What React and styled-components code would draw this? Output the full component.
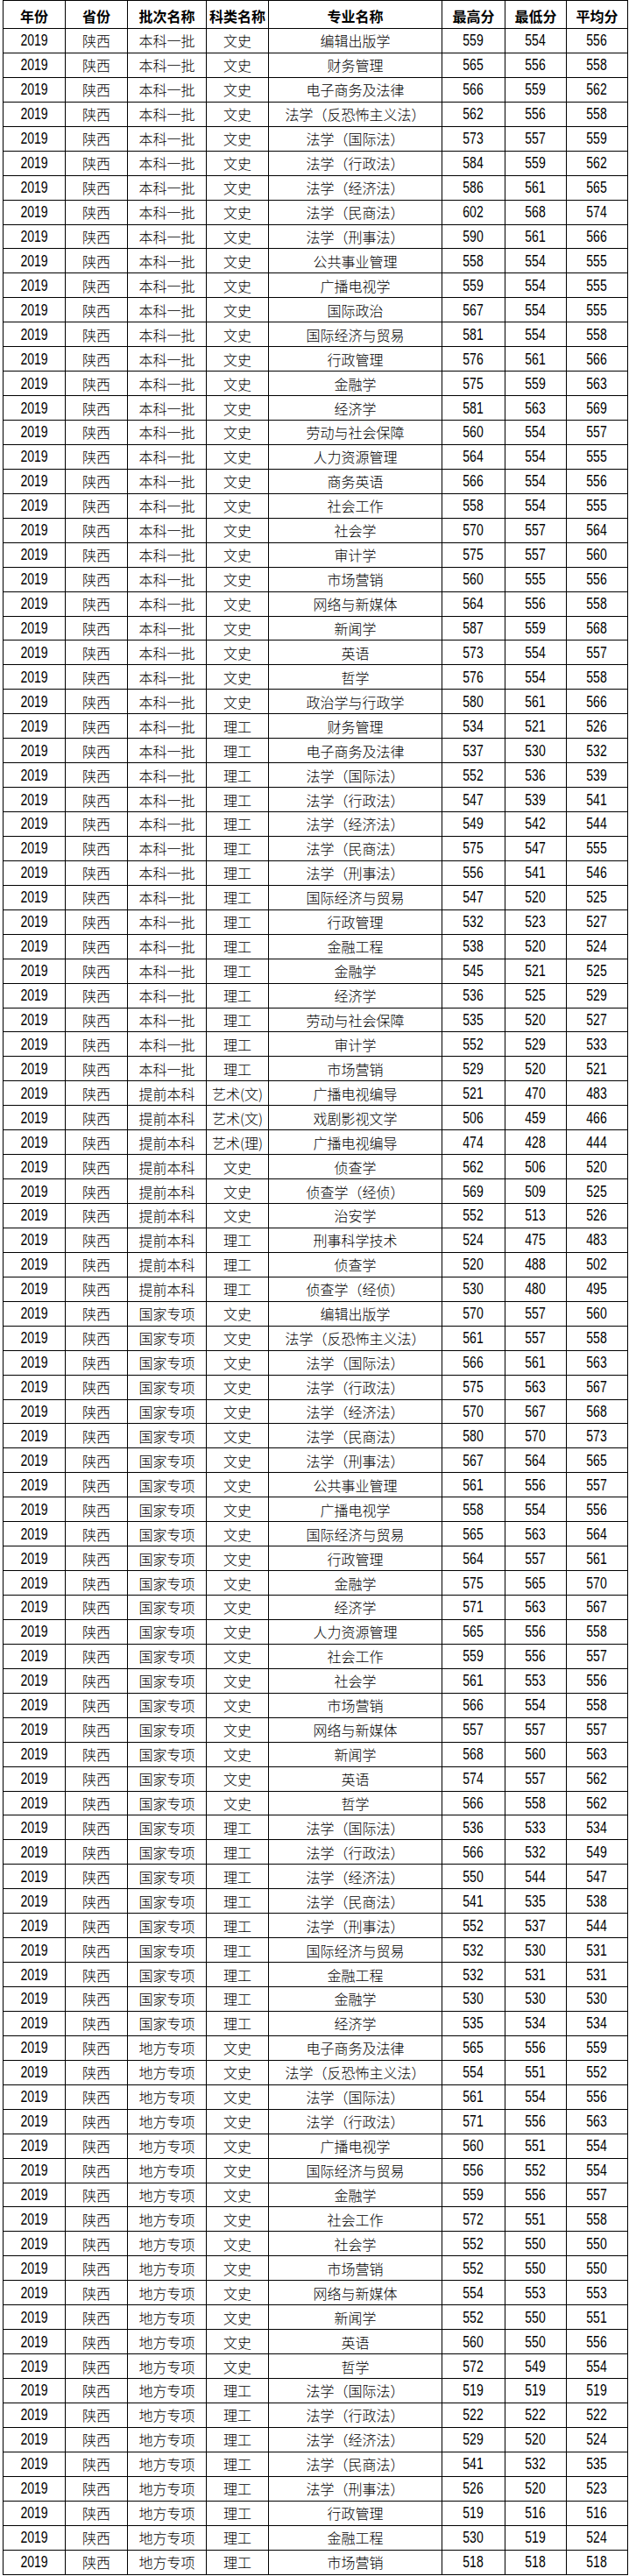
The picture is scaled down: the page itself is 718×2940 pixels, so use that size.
import React from "react";
import styled, { createGlobalStyle } from "styled-components";

const GlobalStyle = createGlobalStyle`
  html, body {
    margin: 0;
    padding: 0;
    background: #fff;
  }
`;

const Page = styled.div`
  width: 718px;
  padding-left: 3px;
  box-sizing: border-box;
  background: #fff;
`;

const Sheet = styled.div`
  display: grid;
  grid-template-columns: 71px 71px 90px 71px 198px 72px 70px 70px;
  grid-template-rows: 32px;
  grid-auto-rows: 27.94px;
  width: 714px;
  border-left: 1px solid #000;
  border-top: 1px solid #000;
  box-sizing: border-box;
  color: #000;
  font-family: "Noto Sans CJK SC", "Liberation Sans", sans-serif;
`;

const Cell = styled.div`
  display: flex;
  align-items: center;
  justify-content: center;
  border-right: 1px solid #000;
  border-bottom: 1px solid #000;
  box-sizing: border-box;
  font-size: 16px;
  font-weight: 300;
  line-height: 1;
  white-space: nowrap;
  overflow: hidden;
`;

const HeadCell = styled(Cell)`
  font-weight: 700;
  padding-top: 2px;
`;

const Num = styled.span`
  display: inline-block;
  font-family: "Liberation Sans", Arial, sans-serif;
  font-size: 18px;
  font-weight: 400;
  transform: scaleX(0.78);
`;

const headers = ["年份", "省份", "批次名称", "科类名称", "专业名称", "最高分", "最低分", "平均分"];

const rows = [
  ["本科一批", "文史", "编辑出版学", 559, 554, 556],
  ["本科一批", "文史", "财务管理", 565, 556, 558],
  ["本科一批", "文史", "电子商务及法律", 566, 559, 562],
  ["本科一批", "文史", "法学（反恐怖主义法）", 562, 556, 558],
  ["本科一批", "文史", "法学（国际法）", 573, 557, 559],
  ["本科一批", "文史", "法学（行政法）", 584, 559, 562],
  ["本科一批", "文史", "法学（经济法）", 586, 561, 565],
  ["本科一批", "文史", "法学（民商法）", 602, 568, 574],
  ["本科一批", "文史", "法学（刑事法）", 590, 561, 566],
  ["本科一批", "文史", "公共事业管理", 558, 554, 555],
  ["本科一批", "文史", "广播电视学", 559, 554, 555],
  ["本科一批", "文史", "国际政治", 567, 554, 555],
  ["本科一批", "文史", "国际经济与贸易", 581, 554, 558],
  ["本科一批", "文史", "行政管理", 576, 561, 566],
  ["本科一批", "文史", "金融学", 575, 559, 563],
  ["本科一批", "文史", "经济学", 581, 563, 569],
  ["本科一批", "文史", "劳动与社会保障", 560, 554, 557],
  ["本科一批", "文史", "人力资源管理", 564, 554, 555],
  ["本科一批", "文史", "商务英语", 566, 554, 556],
  ["本科一批", "文史", "社会工作", 558, 554, 555],
  ["本科一批", "文史", "社会学", 570, 557, 564],
  ["本科一批", "文史", "审计学", 575, 557, 560],
  ["本科一批", "文史", "市场营销", 560, 555, 556],
  ["本科一批", "文史", "网络与新媒体", 564, 556, 558],
  ["本科一批", "文史", "新闻学", 587, 559, 568],
  ["本科一批", "文史", "英语", 573, 554, 557],
  ["本科一批", "文史", "哲学", 576, 554, 558],
  ["本科一批", "文史", "政治学与行政学", 580, 561, 566],
  ["本科一批", "理工", "财务管理", 534, 521, 526],
  ["本科一批", "理工", "电子商务及法律", 537, 530, 532],
  ["本科一批", "理工", "法学（国际法）", 552, 536, 539],
  ["本科一批", "理工", "法学（行政法）", 547, 539, 541],
  ["本科一批", "理工", "法学（经济法）", 549, 542, 544],
  ["本科一批", "理工", "法学（民商法）", 575, 547, 555],
  ["本科一批", "理工", "法学（刑事法）", 556, 541, 546],
  ["本科一批", "理工", "国际经济与贸易", 547, 520, 525],
  ["本科一批", "理工", "行政管理", 532, 523, 527],
  ["本科一批", "理工", "金融工程", 538, 520, 524],
  ["本科一批", "理工", "金融学", 545, 521, 525],
  ["本科一批", "理工", "经济学", 536, 525, 529],
  ["本科一批", "理工", "劳动与社会保障", 535, 520, 527],
  ["本科一批", "理工", "审计学", 552, 529, 533],
  ["本科一批", "理工", "市场营销", 529, 520, 521],
  ["提前本科", "艺术(文)", "广播电视编导", 521, 470, 483],
  ["提前本科", "艺术(文)", "戏剧影视文学", 506, 459, 466],
  ["提前本科", "艺术(理)", "广播电视编导", 474, 428, 444],
  ["提前本科", "文史", "侦查学", 562, 506, 520],
  ["提前本科", "文史", "侦查学（经侦）", 569, 509, 525],
  ["提前本科", "文史", "治安学", 552, 513, 526],
  ["提前本科", "理工", "刑事科学技术", 524, 475, 483],
  ["提前本科", "理工", "侦查学", 520, 488, 502],
  ["提前本科", "理工", "侦查学（经侦）", 530, 480, 495],
  ["国家专项", "文史", "编辑出版学", 570, 557, 560],
  ["国家专项", "文史", "法学（反恐怖主义法）", 561, 557, 558],
  ["国家专项", "文史", "法学（国际法）", 566, 561, 563],
  ["国家专项", "文史", "法学（行政法）", 575, 563, 567],
  ["国家专项", "文史", "法学（经济法）", 570, 567, 568],
  ["国家专项", "文史", "法学（民商法）", 580, 570, 573],
  ["国家专项", "文史", "法学（刑事法）", 567, 564, 565],
  ["国家专项", "文史", "公共事业管理", 561, 556, 557],
  ["国家专项", "文史", "广播电视学", 558, 554, 556],
  ["国家专项", "文史", "国际经济与贸易", 565, 563, 564],
  ["国家专项", "文史", "行政管理", 564, 557, 561],
  ["国家专项", "文史", "金融学", 575, 565, 570],
  ["国家专项", "文史", "经济学", 571, 563, 567],
  ["国家专项", "文史", "人力资源管理", 565, 556, 558],
  ["国家专项", "文史", "社会工作", 559, 556, 557],
  ["国家专项", "文史", "社会学", 561, 553, 556],
  ["国家专项", "文史", "市场营销", 566, 554, 558],
  ["国家专项", "文史", "网络与新媒体", 557, 557, 557],
  ["国家专项", "文史", "新闻学", 568, 560, 563],
  ["国家专项", "文史", "英语", 574, 557, 562],
  ["国家专项", "文史", "哲学", 566, 558, 562],
  ["国家专项", "理工", "法学（国际法）", 536, 533, 534],
  ["国家专项", "理工", "法学（行政法）", 566, 532, 549],
  ["国家专项", "理工", "法学（经济法）", 550, 544, 547],
  ["国家专项", "理工", "法学（民商法）", 541, 535, 538],
  ["国家专项", "理工", "法学（刑事法）", 552, 537, 544],
  ["国家专项", "理工", "国际经济与贸易", 532, 530, 531],
  ["国家专项", "理工", "金融工程", 532, 531, 531],
  ["国家专项", "理工", "金融学", 530, 530, 530],
  ["国家专项", "理工", "经济学", 535, 534, 534],
  ["地方专项", "文史", "电子商务及法律", 565, 556, 559],
  ["地方专项", "文史", "法学（反恐怖主义法）", 554, 551, 552],
  ["地方专项", "文史", "法学（国际法）", 561, 554, 556],
  ["地方专项", "文史", "法学（行政法）", 571, 556, 563],
  ["地方专项", "文史", "广播电视学", 560, 551, 554],
  ["地方专项", "文史", "国际经济与贸易", 556, 552, 554],
  ["地方专项", "文史", "金融学", 559, 556, 557],
  ["地方专项", "文史", "社会工作", 572, 551, 558],
  ["地方专项", "文史", "社会学", 552, 550, 550],
  ["地方专项", "文史", "市场营销", 552, 550, 550],
  ["地方专项", "文史", "网络与新媒体", 554, 553, 553],
  ["地方专项", "文史", "新闻学", 552, 550, 551],
  ["地方专项", "文史", "英语", 560, 550, 556],
  ["地方专项", "文史", "哲学", 572, 549, 554],
  ["地方专项", "理工", "法学（国际法）", 519, 519, 519],
  ["地方专项", "理工", "法学（行政法）", 522, 522, 522],
  ["地方专项", "理工", "法学（经济法）", 529, 520, 524],
  ["地方专项", "理工", "法学（民商法）", 541, 532, 535],
  ["地方专项", "理工", "法学（刑事法）", 526, 520, 523],
  ["地方专项", "理工", "行政管理", 519, 516, 516],
  ["地方专项", "理工", "金融工程", 530, 519, 524],
  ["地方专项", "理工", "市场营销", 518, 518, 518],
];

export default function App() {
  return (
    <Page>
      <GlobalStyle />
      <Sheet>
        {headers.map((h) => (
          <HeadCell key={h}>{h}</HeadCell>
        ))}
        {rows.map(([batch, kind, major, hi, lo, avg], i) => (
          <React.Fragment key={i}>
            <Cell><Num>2019</Num></Cell>
            <Cell>陕西</Cell>
            <Cell>{batch}</Cell>
            <Cell>{kind}</Cell>
            <Cell>{major}</Cell>
            <Cell><Num>{hi}</Num></Cell>
            <Cell><Num>{lo}</Num></Cell>
            <Cell><Num>{avg}</Num></Cell>
          </React.Fragment>
        ))}
      </Sheet>
    </Page>
  );
}
